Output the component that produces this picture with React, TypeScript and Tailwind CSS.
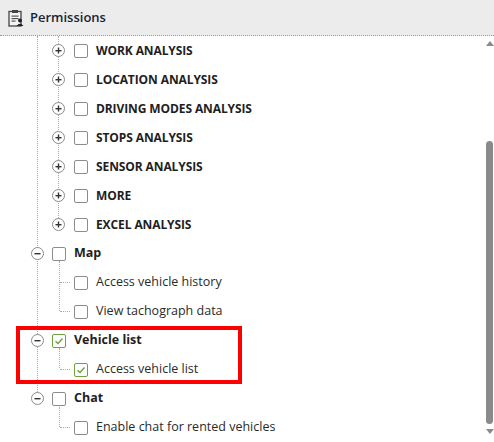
import React from "react";

const Toggle = ({ plus }: { plus: boolean }) => (
  <div className="w-[13px] h-[13px] rounded-full border border-[#8a8a8a] bg-white flex items-center justify-center shrink-0 relative z-10">
    <svg width="7" height="7" viewBox="0 0 7 7">
      <rect x="0.5" y="3" width="6" height="1.4" fill="#333" />
      {plus && <rect x="2.8" y="0.5" width="1.4" height="6" fill="#333" />}
    </svg>
  </div>
);

const Box = ({ checked }: { checked?: boolean }) => (
  <div className={`w-[14px] h-[14px] rounded-[2px] border bg-white flex items-center justify-center shrink-0 ${checked ? "border-[#6da33d]" : "border-[#8c8c8c]"}`}>
    {checked && (
      <svg width="10" height="10" viewBox="0 0 10 10">
        <path d="M1.5 5.2 L4 7.5 L8.5 2.5" stroke="#6da33d" strokeWidth="1.4" fill="none" />
      </svg>
    )}
  </div>
);

const L2 = ({ label }: { label: string }) => (
  <div className="h-[29px] flex items-center pl-[52px]">
    <Toggle plus />
    <div className="ml-[9px]"><Box /></div>
    <span className="ml-[8px] text-[12px] font-bold text-[#1e1e1e] tracking-[-0.1px]">{label}</span>
  </div>
);

const L1 = ({ label, checked }: { label: string; checked?: boolean }) => (
  <div className="h-[29px] flex items-center pl-[31px]">
    <Toggle plus={false} />
    <div className="ml-[8px]"><Box checked={checked} /></div>
    <span className="ml-[8px] text-[12.5px] font-bold text-[#1e1e1e]">{label}</span>
  </div>
);

const Leaf = ({ label, checked }: { label: string; checked?: boolean }) => (
  <div className="h-[29px] flex items-center pl-[60px]">
    <div className="w-[10px] border-t border-dotted border-[#aaa] mr-[4px]" />
    <Box checked={checked} />
    <span className="ml-[8px] text-[12.5px] text-[#2a2a2a]">{label}</span>
  </div>
);

const VLine = ({ x, top, h }: { x: number; top: number; h: number }) => (
  <div className="absolute border-l border-dotted border-[#aaa]" style={{ left: x, top, height: h }} />
);

export default function App() {
  return (
    <div className="w-[494px] h-[442px] bg-white overflow-hidden flex flex-col" style={{ fontFamily: '"Open Sans", "Noto Sans", sans-serif' }}>
      <div className="h-[36px] shrink-0 bg-[#ececec] border-b border-dotted border-[#9a9a9a] flex items-center pl-[8px] gap-[6px]">
        <svg width="16" height="18" viewBox="0 0 16 18">
          <rect x="1" y="2.5" width="12" height="14.5" fill="#f4f4f4" stroke="#444" strokeWidth="1.3" />
          <rect x="4" y="1" width="6" height="3" fill="#444" />
          <rect x="3.5" y="6.5" width="7" height="1.2" fill="#555" />
          <rect x="3.5" y="9" width="7" height="1.2" fill="#555" />
          <rect x="3.5" y="11.5" width="4" height="1.2" fill="#555" />
          <circle cx="12" cy="11.5" r="2" fill="#222" />
          <path d="M8.5 17 Q12 12.5 15.5 17 Z" fill="#222" />
        </svg>
        <span className="text-[13px] font-semibold text-[#1b2433]">Permissions</span>
      </div>
      <div className="flex-1 flex min-h-0">
        <div className="flex-1 relative">
          <VLine x={37} top={0} h={364} />
          <VLine x={58} top={0} h={188} />
          <VLine x={59} top={225} h={50} />
          <VLine x={59} top={312} h={20} />
          <VLine x={59} top={371} h={20} />
          <div className="relative">
            <L2 label="WORK ANALYSIS" />
            <L2 label="LOCATION ANALYSIS" />
            <L2 label="DRIVING MODES ANALYSIS" />
            <L2 label="STOPS ANALYSIS" />
            <L2 label="SENSOR ANALYSIS" />
            <L2 label="MORE" />
            <L2 label="EXCEL ANALYSIS" />
            <L1 label="Map" />
            <Leaf label="Access vehicle history" />
            <Leaf label="View tachograph data" />
            <div className="ml-[16px] w-[226px] h-[58px] border-[4px] border-[#ff0000] flex flex-col justify-center">
              <div className="-ml-[20px]">
                <L1 label="Vehicle list" checked />
                <Leaf label="Access vehicle list" checked />
              </div>
            </div>
            <L1 label="Chat" />
            <Leaf label="Enable chat for rented vehicles" />
          </div>
        </div>
        <div className="w-[8px] shrink-0 flex flex-col items-center pt-[5px] pb-[8px]">
          <div className="w-0 h-0 border-l-[4px] border-r-[4px] border-b-[5px] border-l-transparent border-r-transparent border-b-[#8a8a8a]" />
          <div className="flex-1 w-full flex flex-col pt-[95px] pb-[5px]">
            <div className="flex-1 w-[7px] rounded-full bg-[#8a8a8a]" />
          </div>
          <div className="w-0 h-0 border-l-[4px] border-r-[4px] border-t-[5px] border-l-transparent border-r-transparent border-t-[#8a8a8a]" />
        </div>
      </div>
    </div>
  );
}
